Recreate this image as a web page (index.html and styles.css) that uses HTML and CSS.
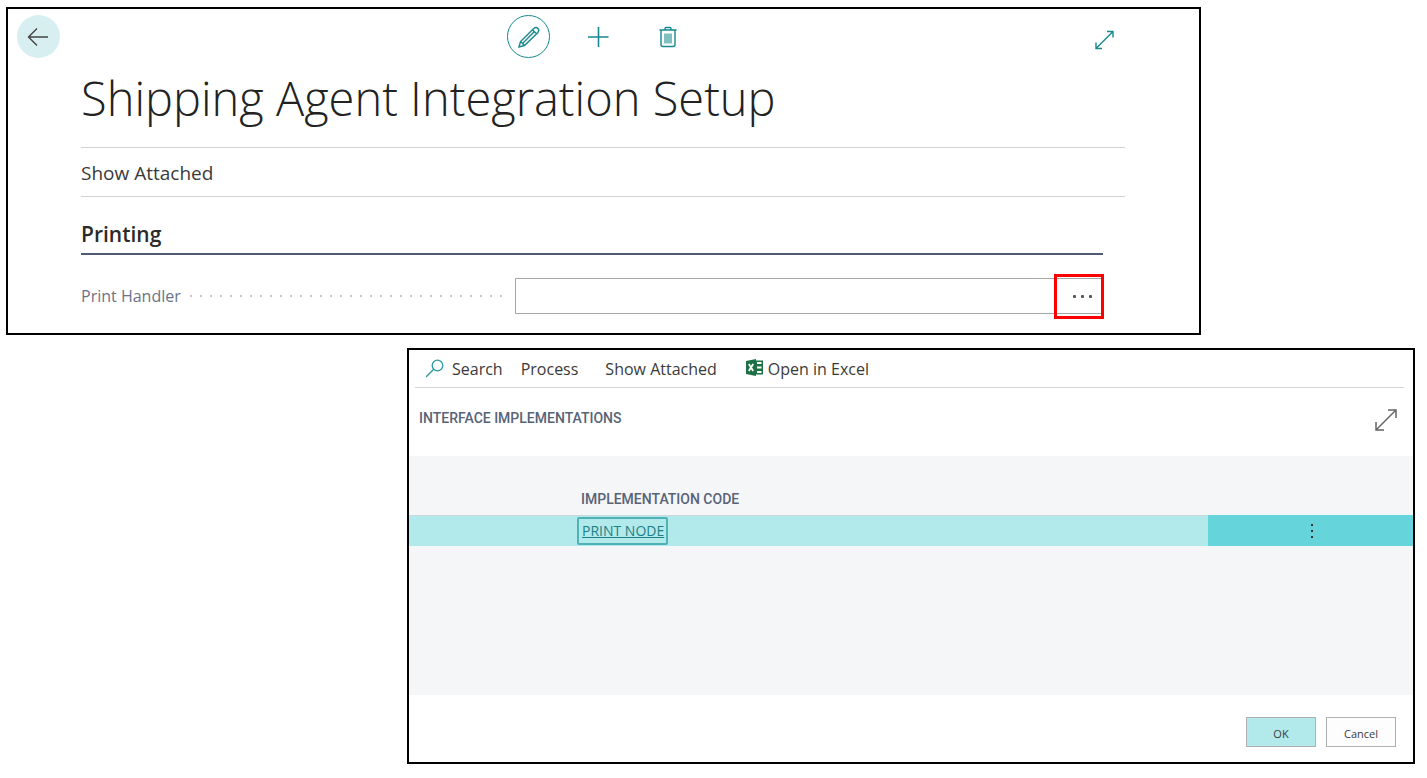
FILE: index.html
```html
<!DOCTYPE html>
<html lang="en">
<head>
<meta charset="utf-8">
<title>Shipping Agent Integration Setup</title>
<link rel="stylesheet" href="styles.css">
</head>
<body>
<main class="setup">
  <header class="setup-bar">
    <button class="round back" aria-label="Back">
      <svg width="42" height="42" viewBox="0 0 42 42"><path d="M30 21H10.500M19 12.500L10.500 21L19 29.500"/></svg>
    </button>
    <div class="setup-tools">
      <button class="round edit" aria-label="Edit">
        <svg width="42" height="42" viewBox="0 0 42 42"><path d="M11 31L12.500 25.500L25.500 12.700Q28 10.500 30 12.500Q31.700 14.500 29.700 16.700L16.500 29.500ZM12.500 25.500L16.500 29.500M24.500 13.700L28.500 17.700M15 27L26 16"/></svg>
      </button>
      <button class="round" aria-label="New">
        <svg width="42" height="42" viewBox="0 0 42 42"><path d="M11 21H31.500M21.500 11V31" stroke-width="1.600"/></svg>
      </button>
      <button class="round" aria-label="Delete">
        <svg width="42" height="42" viewBox="0 0 42 42"><path class="bin" d="M17 17.500h8v10h-8z"/><path d="M12.500 14H29.500M14 14V28.500Q14 30.500 16 30.500H26Q28 30.500 28 28.500V14M18 13.500V12.500Q18 11.500 19 11.500H23Q24 11.500 24 12.500V13.500"/></svg>
      </button>
    </div>
    <button class="round expand" aria-label="Expand page">
      <svg width="42" height="42" viewBox="0 0 42 42"><path d="M14 32.500L31 15.500M25 15.500H31V21.500M14 26.500V32.500H20"/></svg>
    </button>
  </header>
  <div class="setup-body">
    <h1>Shipping Agent Integration Setup</h1>
    <nav class="setup-actions"><a href="#attached">Show Attached</a></nav>
    <section class="group">
      <h2>Printing</h2>
      <div class="field">
        <label for="handler">Print Handler</label>
        <div class="lookup">
          <input id="handler" type="text">
          <button class="lookup-more" aria-label="Choose a value for Print Handler"><i></i><i></i><i></i></button>
        </div>
      </div>
    </section>
  </div>
</main>

<section class="dialog" role="dialog" aria-labelledby="dialog-title">
  <nav class="dialog-bar">
    <a class="search" href="#search"><svg width="19" height="19" viewBox="0 0 19 19"><circle cx="11.500" cy="6.500" r="5.300"/><path d="M7.700 10.300L0 18"/></svg>Search</a>
    <a class="process" href="#process">Process</a>
    <a class="attached" href="#show">Show Attached</a>
    <a class="excel" href="#excel"><svg width="18" height="18" viewBox="0 0 18 18"><path class="green" d="M0 2L10 0V17L0 15Z"/><path class="green" d="M10 1.500H17V15.500H10Z"/><path class="cells" d="M11 4H15.500M11 8.500H15.500M11 13H15.500"/><path class="cross" d="M2.800 5L7.200 12M7.200 5L2.800 12"/></svg>Open in Excel</a>
  </nav>
  <div class="dialog-head">
    <h2 id="dialog-title">INTERFACE IMPLEMENTATIONS</h2>
    <button class="dialog-expand" aria-label="Expand dialog">
      <svg width="24" height="24" viewBox="0 0 24 24"><path d="M2 22L22 2M14 2H22V10M2 14V22H10"/></svg>
    </button>
  </div>
  <div class="list">
    <table>
      <colgroup><col class="col-lead"><col><col class="col-menu"></colgroup>
      <thead><tr><td></td><th scope="col">IMPLEMENTATION CODE</th><td></td></tr></thead>
      <tbody><tr>
        <td></td>
        <td><a class="code" href="#print-node">PRINT NODE</a></td>
        <td class="menu"><button aria-label="Show more options"><i></i><i></i><i></i></button></td>
      </tr></tbody>
    </table>
  </div>
  <footer class="dialog-foot">
    <button class="primary">OK</button>
    <button>Cancel</button>
  </footer>
</section>
</body>
</html>
```
FILE: styles.css
```css
* { box-sizing: border-box; }
body {
  margin: 0;
  padding: 7px 12px 14px 6px;
  background: #fff;
  color: #3a3a3a;
  font-family: "Open Sans", "Noto Sans", sans-serif;
}
a { color: inherit; text-decoration: none; }
button { padding: 0; border: 0; background: none; font: inherit; color: inherit; cursor: pointer; }
svg { display: block; flex: none; fill: none; stroke: currentColor; }
h1, h2 { margin: 0; }

.setup { margin-right: 214px; padding: 6px 0 19px; border: 2px solid #000; }
.setup-bar {
  display: grid;
  grid-template-columns: 1fr auto 1fr;
  align-items: center;
  padding: 0 20px 0 9px;
  color: #16898f;
}
.setup-tools { display: flex; gap: 27px; }
.round {
  display: grid;
  place-items: center;
  width: 43px;
  height: 43px;
  border-radius: 50%;
  stroke-width: 1.400;
}
.back { background: #d8eff2; color: #444; }
.edit { border: 1px solid #16898f; }
.bin { fill: #80c0c3; stroke: none; }
.expand { justify-self: end; margin-right: 55px; }
.setup-body { padding: 0 74px 0 73px; }
h1 { padding-top: 7px; font-size: 47px; line-height: 66px; font-weight: 300; color: #222; white-space: nowrap; }
.setup-actions {
  margin-top: 16px;
  padding: 12px 0 9px;
  border-top: 1px solid #d2d2d8;
  border-bottom: 1px solid #d2d2d8;
  font-size: 19px;
  line-height: 27px;
}
.group { margin-right: 22px; }
.group h2 {
  padding: 22px 0 4px;
  border-bottom: 2px solid #505a73;
  font-size: 21px;
  line-height: 30px;
  font-weight: 600;
  color: #2b2b2b;
}
.field { display: flex; align-items: center; padding-top: 23px; }
.field label {
  display: flex;
  align-items: center;
  gap: 9px;
  width: 42.5%;
  padding-right: 7px;
  font-size: 16px;
  color: #6a7488;
}
.field label::after {
  content: "";
  flex: 1;
  height: 2px;
  background: repeating-linear-gradient(to right, #ccc 0 2px, transparent 2px 10px);
}
.lookup { position: relative; flex: 1; }
.lookup input { display: block; width: 100%; height: 36px; padding: 0 56px 0 8px; border: 1px solid #a6a6a6; font: inherit; }
.lookup-more {
  position: absolute;
  top: -4px;
  right: -1px;
  display: flex;
  align-items: center;
  justify-content: center;
  gap: 5px;
  width: 50px;
  height: 45px;
  padding-left: 6px;
  border: 3px solid #f00;
}
.lookup-more i { width: 3px; height: 3px; border-radius: 1px; background: #555; }
.menu i { width: 2px; height: 2px; background: #333; }

.dialog { margin: 13px 0 0 401px; border: 2px solid #000; }
.dialog-bar {
  display: flex;
  align-items: center;
  height: 38px;
  margin: 0 9px 0 6px;
  padding-left: 11px;
  border-bottom: 1px solid #d4d4d4;
  font-size: 16px;
  line-height: 24px;
  white-space: nowrap;
}
.dialog-bar a { display: flex; align-items: center; }
.search { gap: 7px; margin-right: 18px; }
.search svg { color: #2a9aa0; stroke-width: 1.300; }
.process { margin-right: 27px; }
.attached { margin-right: 29px; }
.excel { gap: 4px; }
.excel svg { margin-bottom: 2px; }
.green { fill: #1e7145; stroke: none; }
.cells { stroke: #fff; stroke-width: 2; }
.cross { stroke: #fff; stroke-width: 1.800; }
.dialog-head {
  display: flex;
  align-items: center;
  justify-content: space-between;
  height: 68px;
  padding: 0 15px 8px 10px;
}
.dialog-head h2, th { font-family: Roboto, sans-serif; font-size: 14px; font-weight: 500; color: #586377; }
.dialog-expand { margin-top: 4px; color: #666; stroke-width: 1.500; }
.list { min-height: 239px; background: #f5f6f8; }
table { width: 100%; border-collapse: collapse; table-layout: fixed; }
td, th { padding: 0; text-align: left; }
thead tr { height: 59px; }
th { padding: 26px 0 0 4px; }
tbody tr { height: 31px; background: #b2e9eb; box-shadow: inset 0 1px #cbd8db; }
.col-lead { width: 168px; }
.col-menu { width: 205px; }
.code {
  display: block;
  width: 91px;
  padding-left: 3px;
  border: 2px solid #4fb2b6;
  border-radius: 2px;
  font-size: 14px;
  line-height: 24px;
  color: #1b7f86;
  text-decoration: underline;
  white-space: nowrap;
}
.menu { background: #65d5db; }
.menu button { display: flex; flex-direction: column; align-items: center; justify-content: center; gap: 4px; width: 100%; height: 31px; padding-left: 3px; }
.dialog-foot { display: flex; justify-content: flex-end; gap: 10px; padding: 22px 17px 15px; }
.dialog-foot button {
  width: 70px;
  height: 30px;
  padding-top: 3px;
  border: 1px solid #b0b0b0;
  background: #fdfdfd;
  font-size: 11px;
}
.dialog-foot .primary { background: #b2e9eb; }
```
